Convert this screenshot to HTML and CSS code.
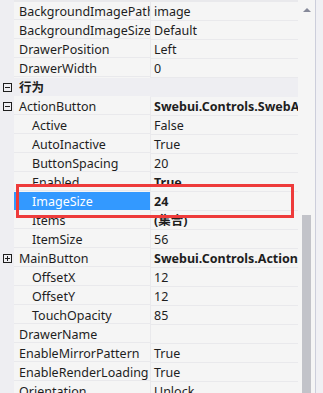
FILE: index.html
```html
<!DOCTYPE html>
<html lang="zh">
<head>
    <meta charset="UTF-8">
    <title>属性</title>
    <link rel="stylesheet" href="styles.css">
</head>
<body>
    <div class="panel">
        <div class="grid">
            <div class="row"><div class="gutter"></div><div class="name">BackgroundImagePath</div><div class="value">image</div></div>
            <div class="row"><div class="gutter"></div><div class="name">BackgroundImageSize</div><div class="value">Default</div></div>
            <div class="row"><div class="gutter"></div><div class="name">DrawerPosition</div><div class="value">Left</div></div>
            <div class="row"><div class="gutter"></div><div class="name">DrawerWidth</div><div class="value">0</div></div>
            <div class="row category"><div class="gutter"><span class="toggle minus"></span></div><div class="name">行为</div><div class="value"></div></div>
            <div class="row"><div class="gutter"><span class="toggle minus"></span></div><div class="name">ActionButton</div><div class="value bold">Swebui.Controls.SwebActionButton</div></div>
            <div class="row"><div class="gutter"></div><div class="name sub">Active</div><div class="value">False</div></div>
            <div class="row"><div class="gutter"></div><div class="name sub">AutoInactive</div><div class="value">True</div></div>
            <div class="row"><div class="gutter"></div><div class="name sub">ButtonSpacing</div><div class="value">20</div></div>
            <div class="row"><div class="gutter"></div><div class="name sub">Enabled</div><div class="value bold">True</div></div>
            <div class="row selected"><div class="gutter"></div><div class="name sub">ImageSize</div><div class="value bold">24</div></div>
            <div class="row"><div class="gutter"></div><div class="name sub">Items</div><div class="value bold">(集合)</div></div>
            <div class="row"><div class="gutter"></div><div class="name sub">ItemSize</div><div class="value">56</div></div>
            <div class="row"><div class="gutter"><span class="toggle plus"></span></div><div class="name">MainButton</div><div class="value bold">Swebui.Controls.ActionItem</div></div>
            <div class="row"><div class="gutter"></div><div class="name sub">OffsetX</div><div class="value">12</div></div>
            <div class="row"><div class="gutter"></div><div class="name sub">OffsetY</div><div class="value">12</div></div>
            <div class="row"><div class="gutter"></div><div class="name sub">TouchOpacity</div><div class="value">85</div></div>
            <div class="row"><div class="gutter"></div><div class="name">DrawerName</div><div class="value"></div></div>
            <div class="row"><div class="gutter"></div><div class="name">EnableMirrorPattern</div><div class="value">True</div></div>
            <div class="row"><div class="gutter"></div><div class="name">EnableRenderLoading</div><div class="value">True</div></div>
            <div class="row"><div class="gutter"></div><div class="name">Orientation</div><div class="value">Unlock</div></div>
        </div>
        <div class="scrollbar">
            <span class="arrow"></span>
            <div class="thumb"></div>
        </div>
        <div class="edge"></div>
    </div>
    <div class="mark"></div>
</body>
</html>
```

FILE: styles.css
```css
body, html {
    margin: 0;
    padding: 0;
    background-color: #f5f5f5;
    font-family: "Noto Sans", "Noto Sans CJK SC", sans-serif;
    font-size: 12.5px;
    color: #1e1e1e;
    overflow: hidden;
}

.panel {
    display: flex;
    height: 393px;
    position: relative;
}

.grid {
    width: 298px;
    padding-top: 2px;
    background: linear-gradient(to right, #eeeef2 14px, #e9e9ec 14px);
    background-size: 100% 2px;
    background-repeat: no-repeat;
}

.row {
    display: flex;
    height: 19px;
}

.gutter {
    width: 14px;
    flex-shrink: 0;
    background-color: #eeeef2;
    display: flex;
    align-items: center;
    padding-left: 3px;
    box-sizing: border-box;
}

.name, .value {
    height: 18px;
    line-height: 20px;
    border-bottom: 1px solid #e9e9ec;
    white-space: nowrap;
    overflow: hidden;
    background-color: #f5f5f5;
}

.name {
    width: 136px;
    padding-left: 5px;
    box-sizing: border-box;
    flex-shrink: 0;
}

.name.sub {
    padding-left: 18px;
}

.value {
    flex: 1;
    padding-left: 3px;
    border-left: 1px solid #e9e9ec;
}

.bold {
    font-weight: bold;
}

.category .name,
.category .value {
    background-color: #eeeef2;
    border-bottom-color: #eeeef2;
    font-weight: bold;
}

.category .value {
    border-left-color: #eeeef2;
}

.selected .name {
    background-color: #3399ff;
    color: #ffffff;
    border-bottom-color: #3399ff;
}

.toggle {
    display: block;
    width: 9px;
    height: 9px;
    box-sizing: border-box;
    border: 1px solid #1e1e1e;
    position: relative;
}

.toggle::before {
    content: "";
    position: absolute;
    left: 1px;
    top: 3px;
    width: 5px;
    height: 1px;
    background-color: #1e1e1e;
}

.plus::after {
    content: "";
    position: absolute;
    left: 3px;
    top: 1px;
    width: 1px;
    height: 5px;
    background-color: #1e1e1e;
}

.scrollbar {
    width: 17px;
    position: relative;
    background-color: #f5f5f5;
}

.arrow {
    position: absolute;
    left: 5px;
    top: 8px;
    width: 0;
    height: 0;
    border-left: 4px solid transparent;
    border-right: 4px solid transparent;
    border-bottom: 4px solid #868999;
}

.thumb {
    position: absolute;
    left: 4px;
    top: 215px;
    width: 9px;
    bottom: 0;
    background-color: #c2c3c9;
}

.edge {
    flex: 1;
    border-left: 1px solid #cccedb;
    background-color: #f0f0f4;
}

.mark {
    position: absolute;
    left: 16px;
    top: 184px;
    width: 278px;
    height: 34px;
    box-sizing: border-box;
    border: 3px solid #ee3b3b;
}
```
